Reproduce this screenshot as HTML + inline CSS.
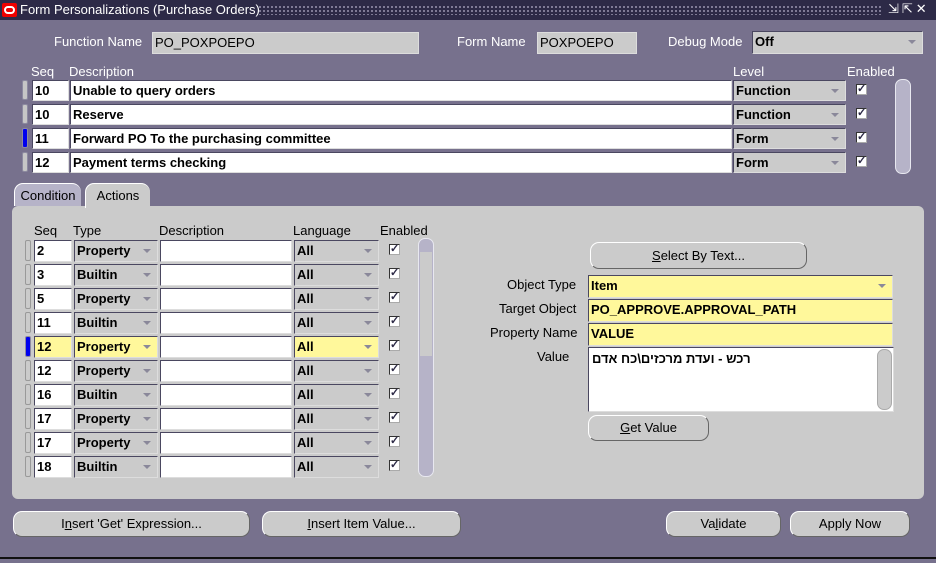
<!DOCTYPE html>
<html><head><meta charset="utf-8"><style>
*{box-sizing:border-box;margin:0;padding:0}
body{width:936px;height:563px;background:#77718d;font-family:"Liberation Sans",sans-serif;position:relative;overflow:hidden;font-size:13px;color:#000}
.a{position:absolute}
.tb{left:0;top:0;width:936px;height:20px;background:#2d2a47;color:#fff;font-size:13px}
.dots{left:258px;top:5px;width:625px;height:10px;background-image:radial-gradient(#9a96b0 0.8px,transparent 1px);background-size:4px 4px}
.lbl{color:#fff;font-size:13px;white-space:nowrap}
.dl{color:#000;font-size:13px;white-space:nowrap}
.f{background:#fff;border:1px solid #4a4760;border-right-color:#ddd;border-bottom-color:#ddd;font-weight:bold;font-size:13px;padding-left:2px;line-height:19px;white-space:nowrap;overflow:hidden}
.g{background:#cbcbcb}
.y{background:#fff89b}
.sel::after{content:"";position:absolute;right:6px;top:8px;border-left:4px solid transparent;border-right:4px solid transparent;border-top:4px solid #8a889a}
.ck{width:11px;height:11px;background:#fff;border:1px solid #333;border-right-color:#aaa;border-bottom-color:#aaa;font-size:11px;line-height:9px;text-align:center;font-weight:bold;color:#2d2a47}
.ind{width:6px;height:20px;background:#c6c6c6;border:1px solid #8d8aa0;border-radius:2px}
.ind.b{background:#0000ee}
.sb{background:#b6b3c8;border:1px solid #e8e8f0;border-radius:7px}
.btn{background:#cbcbcb;border:1px solid #666;border-top-color:#fff;border-left-color:#fff;border-radius:9px;text-align:center;font-size:13px;line-height:23px}
.btn2{background:#cbcbcb;border-radius:9px 9px 0 0;text-align:center;font-size:13px;line-height:24px;border-top:1px solid #fff;border-left:1px solid #fff}
u{text-decoration:underline}
</style></head><body>
<div class="a tb"><div class="a" style="left:2px;top:3px;width:15px;height:14px;background:#e00;border-radius:2px"><div class="a" style="left:2px;top:3px;width:11px;height:8px;border:2px solid #fff;border-radius:5px"></div></div><div class="a" style="left:20px;top:2px">Form Personalizations (Purchase Orders)</div><div class="a dots"></div><div class="a" style="left:888px;top:1px;font-size:13px;letter-spacing:3px">⇲⇱✕</div></div>

<div class="a lbl" style="left:54px;top:34px">Function Name</div>
<div class="a f g" style="left:152px;top:32px;width:267px;height:22px;font-weight:normal;border-color:#ddd">PO_POXPOEPO</div>
<div class="a lbl" style="left:457px;top:34px">Form Name</div>
<div class="a f g" style="left:537px;top:32px;width:100px;height:22px;font-weight:normal;border-color:#ddd">POXPOEPO</div>
<div class="a lbl" style="left:668px;top:34px">Debug Mode</div>
<div class="a f g sel" style="left:752px;top:31px;width:171px;height:23px">Off</div>

<div class="a lbl" style="left:31px;top:64px">Seq</div>
<div class="a lbl" style="left:69px;top:64px">Description</div>
<div class="a lbl" style="left:733px;top:64px">Level</div>
<div class="a lbl" style="left:847px;top:64px">Enabled</div>

<div class="a ind" style="left:22px;top:80px"></div><div class="a f" style="left:32px;top:80px;width:37px;height:21px">10</div><div class="a f" style="left:70px;top:80px;width:662px;height:21px">Unable to query orders</div><div class="a f g sel" style="left:733px;top:80px;width:113px;height:21px">Function</div><div class="a ck" style="left:856px;top:84px">✓</div>
<div class="a ind" style="left:22px;top:104px"></div><div class="a f" style="left:32px;top:104px;width:37px;height:21px">10</div><div class="a f" style="left:70px;top:104px;width:662px;height:21px">Reserve</div><div class="a f g sel" style="left:733px;top:104px;width:113px;height:21px">Function</div><div class="a ck" style="left:856px;top:108px">✓</div>
<div class="a ind b" style="left:22px;top:128px"></div><div class="a f" style="left:32px;top:128px;width:37px;height:21px">11</div><div class="a f" style="left:70px;top:128px;width:662px;height:21px">Forward PO To the purchasing committee</div><div class="a f g sel" style="left:733px;top:128px;width:113px;height:21px">Form</div><div class="a ck" style="left:856px;top:132px">✓</div>
<div class="a ind" style="left:22px;top:152px"></div><div class="a f" style="left:32px;top:152px;width:37px;height:21px">12</div><div class="a f" style="left:70px;top:152px;width:662px;height:21px">Payment terms checking</div><div class="a f g sel" style="left:733px;top:152px;width:113px;height:21px">Form</div><div class="a ck" style="left:856px;top:156px">✓</div>
<div class="a sb" style="left:895px;top:79px;width:16px;height:95px"></div>

<div class="a" style="left:12px;top:206px;width:912px;height:293px;background:#cbcbcb;border-radius:6px"></div>
<div class="a btn2" style="left:14px;top:183px;width:67px;height:23px;background:#b6b3c8;color:#000">Condition</div>
<div class="a btn2" style="left:85px;top:183px;width:65px;height:25px">Actions</div>

<div class="a dl" style="left:34px;top:223px">Seq</div>
<div class="a dl" style="left:73px;top:223px">Type</div>
<div class="a dl" style="left:159px;top:223px">Description</div>
<div class="a dl" style="left:293px;top:223px">Language</div>
<div class="a dl" style="left:380px;top:223px">Enabled</div>
<div class="a sb" style="left:418px;top:238px;width:16px;height:239px;background:#b6b3c8"></div>
<div class="a" style="left:420px;top:252px;width:12px;height:104px;background:#cbcbcb"></div>

<div id="rows"></div>
<script>
var d=[["2","Property"],["3","Builtin"],["5","Property"],["11","Builtin"],["12","Property"],["12","Property"],["16","Builtin"],["17","Property"],["17","Property"],["18","Builtin"]];
var h="";
d.forEach(function(r,i){var t=240+i*24,y=i==4;
h+='<div class="a ind'+(y?' b':'')+'" style="left:25px;top:'+t+'px;width:6px;height:21px;'+(y?'':'background:#cbcbcb;border-color:#999')+'"></div>';
h+='<div class="a f'+(y?' y':'')+'" style="left:34px;top:'+t+'px;width:38px;height:22px">'+r[0]+'</div>';
h+='<div class="a f '+(y?'y':'g')+' sel" style="left:74px;top:'+t+'px;width:84px;height:22px">'+r[1]+'</div>';
h+='<div class="a f" style="left:160px;top:'+t+'px;width:132px;height:22px"></div>';
h+='<div class="a f '+(y?'y':'g')+' sel" style="left:294px;top:'+t+'px;width:85px;height:22px">All</div>';
h+='<div class="a ck" style="left:389px;top:'+(t+4)+'px">✓</div>';});
document.getElementById("rows").innerHTML=h;
</script>

<div class="a btn" style="left:590px;top:242px;width:217px;height:27px;line-height:25px"><u>S</u>elect By Text...</div>
<div class="a dl" style="left:507px;top:277px">Object Type</div>
<div class="a f y sel" style="left:588px;top:275px;width:305px;height:23px">Item</div>
<div class="a dl" style="left:499px;top:301px">Target Object</div>
<div class="a f y" style="left:588px;top:299px;width:305px;height:23px">PO_APPROVE.APPROVAL_PATH</div>
<div class="a dl" style="left:490px;top:325px">Property Name</div>
<div class="a f y" style="left:588px;top:323px;width:305px;height:23px">VALUE</div>
<div class="a dl" style="left:537px;top:349px">Value</div>
<div class="a f" style="left:588px;top:347px;width:306px;height:65px;font-family:'Liberation Sans','DejaVu Sans',sans-serif;font-weight:bold;direction:rtl;text-align:left;padding-right:0"><span style="position:absolute;left:3px;top:1px">רכש - ועדת מרכזים\כח אדם</span></div>
<div class="a sb" style="left:877px;top:349px;width:15px;height:61px;background:#cbcbcb;border-color:#aaa"></div>
<div class="a btn" style="left:588px;top:415px;width:121px;height:26px"><u>G</u>et Value</div>

<div class="a btn" style="left:13px;top:511px;width:237px;height:26px">I<u>n</u>sert 'Get' Expression...</div>
<div class="a btn" style="left:262px;top:511px;width:199px;height:26px"><u>I</u>nsert Item Value...</div>
<div class="a btn" style="left:666px;top:511px;width:115px;height:26px">Va<u>l</u>idate</div>
<div class="a btn" style="left:790px;top:511px;width:120px;height:26px">Apply Now</div>
<div class="a" style="left:0;top:557px;width:936px;height:2px;background:#111"></div>
<div class="a" style="left:0;top:559px;width:936px;height:4px;background:#77718d"></div>
</body></html>
